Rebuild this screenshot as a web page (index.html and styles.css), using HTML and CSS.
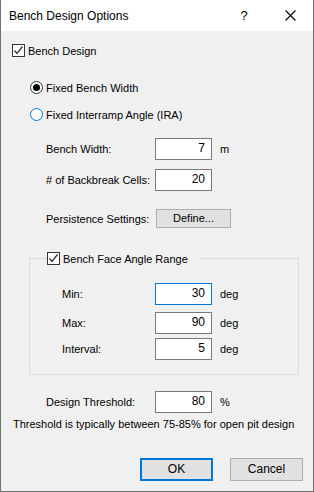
FILE: index.html
```html
<!DOCTYPE html>
<html lang="en">
<head>
    <meta charset="UTF-8">
    <title>Bench Design Options</title>
    <link rel="stylesheet" href="styles.css">
</head>
<body>
    <div class="dialog">
        <div class="titlebar">
            <span class="title">Bench Design Options</span>
            <span class="help">?</span>
            <span class="close">
                <svg width="11" height="11" viewBox="0 0 11 11"><path d="M0.5 0.5 L10.5 10.5 M10.5 0.5 L0.5 10.5" stroke="#000" stroke-width="1.1" fill="none"/></svg>
            </span>
        </div>

        <div class="content">
            <div class="check-row main-check">
                <span class="checkbox">
                    <svg width="11" height="11" viewBox="0 0 11 11"><path d="M1.5 5.5 L4 8.5 L9.5 1.5" stroke="#333" stroke-width="1.3" fill="none"/></svg>
                </span>
                <span>Bench Design</span>
            </div>

            <div class="section">
                <div class="radio-row first">
                    <span class="radio checked"><span class="radio-dot"></span></span>
                    <span>Fixed Bench Width</span>
                </div>
                <div class="radio-row second">
                    <span class="radio hover"></span>
                    <span>Fixed Interramp Angle (IRA)</span>
                </div>

                <div class="field width-field">
                    <span class="label">Bench Width:</span>
                    <span class="input">7</span>
                    <span class="unit">m</span>
                </div>
                <div class="field backbreak-field">
                    <span class="label"># of Backbreak Cells:</span>
                    <span class="input">20</span>
                </div>
                <div class="field persistence-field">
                    <span class="label">Persistence Settings:</span>
                    <span class="button define">Define...</span>
                </div>

                <fieldset class="group">
                    <legend class="check-row">
                        <span class="checkbox">
                            <svg width="11" height="11" viewBox="0 0 11 11"><path d="M1.5 5.5 L4 8.5 L9.5 1.5" stroke="#333" stroke-width="1.3" fill="none"/></svg>
                        </span>
                        <span>Bench Face Angle Range</span>
                    </legend>
                    <div class="group-fields">
                        <div class="field">
                            <span class="label">Min:</span>
                            <span class="input focused">30</span>
                            <span class="unit">deg</span>
                        </div>
                        <div class="field max-field">
                            <span class="label">Max:</span>
                            <span class="input">90</span>
                            <span class="unit">deg</span>
                        </div>
                        <div class="field interval-field">
                            <span class="label">Interval:</span>
                            <span class="input">5</span>
                            <span class="unit">deg</span>
                        </div>
                    </div>
                </fieldset>

                <div class="field threshold-field">
                    <span class="label">Design Threshold:</span>
                    <span class="input">80</span>
                    <span class="unit">%</span>
                </div>
            </div>

            <div class="note">Threshold is typically between 75-85% for open pit design</div>

            <div class="actions">
                <span class="button primary">OK</span>
                <span class="button">Cancel</span>
            </div>
        </div>
    </div>
</body>
</html>
```

FILE: styles.css
```css
* {
    box-sizing: border-box;
    margin: 0;
    padding: 0;
}

body {
    font-family: "Liberation Sans", Arial, sans-serif;
    font-size: 11px;
    color: #000;
    background-color: #3b2e22;
    white-space: nowrap;
}

.dialog {
    width: 314px;
    height: 492px;
    background-color: #f0f0f0;
    border-left: 1px solid #707070;
    border-right: 1px solid #707070;
    border-bottom: 1px solid #707070;
}

.titlebar {
    height: 31px;
    background-color: #fff;
    display: flex;
    align-items: center;
}

.title {
    flex: 1;
    padding-left: 8px;
    font-size: 12px;
}

.help {
    width: 46px;
    text-align: center;
    font-size: 13px;
    margin-left: 3px;
}

.close {
    width: 46px;
    display: flex;
    justify-content: center;
}

.content {
    padding-left: 11px;
}

/* checkboxes and radios */

.check-row {
    display: flex;
    align-items: center;
    height: 13px;
    gap: 3px;
}

.main-check {
    margin-top: 13px;
}

.checkbox {
    width: 13px;
    height: 13px;
    border: 1px solid #333;
    background-color: #fff;
    display: flex;
    align-items: center;
    justify-content: center;
}

.section {
    padding-left: 18px;
}

.radio-row {
    display: flex;
    align-items: center;
    height: 13px;
    gap: 3px;
}

.radio-row.first {
    margin-top: 24px;
}

.radio-row.second {
    margin-top: 14px;
}

.radio {
    width: 13px;
    height: 13px;
    border-radius: 50%;
    border: 1px solid #333;
    background-color: #fff;
    display: flex;
    align-items: center;
    justify-content: center;
}

.radio.hover {
    border-color: #0078d7;
}

.radio-dot {
    width: 7px;
    height: 7px;
    border-radius: 50%;
    background-color: #000;
}

/* fields */

.field {
    display: flex;
    align-items: center;
    height: 22px;
    padding-left: 16px;
}

.field .label {
    width: 109px;
}

.width-field {
    margin-top: 17px;
}

.backbreak-field {
    margin-top: 9px;
}

.persistence-field {
    margin-top: 17px;
    height: 21px;
}

.input {
    width: 57px;
    height: 22px;
    border: 1px solid #7a7a7a;
    background-color: #fff;
    text-align: right;
    padding-right: 6px;
    line-height: 19px;
    font-size: 12px;
}

.input.focused {
    border-color: #0078d7;
}

.unit {
    margin-left: 8px;
}

.button {
    display: inline-block;
    width: 75px;
    height: 23px;
    line-height: 21px;
    text-align: center;
    border: 1px solid #adadad;
    background-color: #e1e1e1;
}

.button.define {
    height: 19px;
    line-height: 17px;
    margin-left: 1px;
}

.button.primary {
    border: 2px solid #0078d7;
    line-height: 19px;
}

/* group box */

.group {
    margin-top: 23px;
    width: 270px;
    margin-left: -1px;
    border: 1px solid #dcdcdc;
    padding: 0;
}

.group legend {
    margin-left: 17px;
    padding-right: 11px;
}

.group-fields {
    padding-top: 18px;
    padding-bottom: 14px;
}

.group-fields .field {
    padding-left: 32px;
}

.group-fields .label {
    width: 93px;
}

.max-field {
    margin-top: 7px;
}

.interval-field {
    margin-top: 4px;
}

.threshold-field {
    margin-top: 16px;
}

.note {
    margin-top: 5px;
    padding-left: 1px;
}

.actions {
    display: flex;
    justify-content: flex-end;
    gap: 17px;
    margin-top: 28px;
    padding-right: 10px;
}

.actions .button {
    width: 73px;
    font-size: 12px;
}
```
